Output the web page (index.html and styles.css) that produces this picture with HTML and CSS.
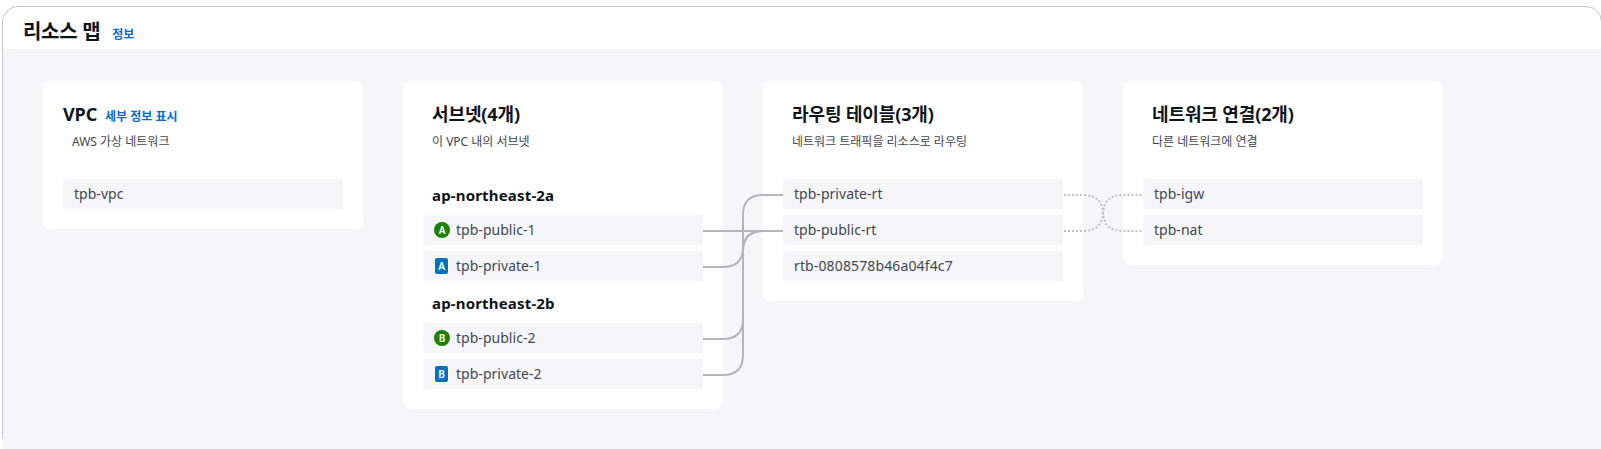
FILE: index.html
```html
<!DOCTYPE html>
<html lang="ko">
<head>
<meta charset="utf-8">
<title>리소스 맵</title>
<link rel="stylesheet" href="styles.css">
</head>
<body>
<section class="panel">
  <header class="panel-header">
    <h2 class="panel-title">리소스 맵</h2>
    <a class="info-link">정보</a>
  </header>
  <div class="map">
    <article class="card">
      <div class="card-head">
        <h3 class="card-title">VPC</h3>
        <a class="detail-link">세부 정보 표시</a>
      </div>
      <p class="card-desc">AWS 가상 네트워크</p>
      <ul class="items">
        <li class="item"><span class="name">tpb-vpc</span></li>
      </ul>
    </article>
    <article class="card">
      <div class="card-head indent"><h3 class="card-title">서브넷(4개)</h3></div>
      <p class="card-desc">이 VPC 내의 서브넷</p>
      <h4 class="zone">ap-northeast-2a</h4>
      <ul class="items zone-items">
        <li class="item"><span class="badge public">A</span><span class="name">tpb-public-1</span></li>
        <li class="item"><span class="badge private">A</span><span class="name">tpb-private-1</span></li>
      </ul>
      <h4 class="zone">ap-northeast-2b</h4>
      <ul class="items zone-items">
        <li class="item"><span class="badge public">B</span><span class="name">tpb-public-2</span></li>
        <li class="item"><span class="badge private">B</span><span class="name">tpb-private-2</span></li>
      </ul>
    </article>
    <article class="card">
      <div class="card-head indent"><h3 class="card-title">라우팅 테이블(3개)</h3></div>
      <p class="card-desc">네트워크 트래픽을 리소스로 라우팅</p>
      <ul class="items">
        <li class="item"><span class="name">tpb-private-rt</span></li>
        <li class="item"><span class="name">tpb-public-rt</span></li>
        <li class="item"><span class="name id">rtb-0808578b46a04f4c7</span></li>
      </ul>
    </article>
    <article class="card">
      <div class="card-head indent"><h3 class="card-title">네트워크 연결(2개)</h3></div>
      <p class="card-desc">다른 네트워크에 연결</p>
      <ul class="items">
        <li class="item"><span class="name">tpb-igw</span></li>
        <li class="item"><span class="name">tpb-nat</span></li>
      </ul>
    </article>
    <svg class="links" width="1440" height="320" viewBox="0 0 1440 320">
      <g class="solid">
        <path d="M660 150H740"/>
        <path d="M660 186H680Q700 186 700 166V170Q700 150 720 150H740"/>
        <path d="M660 258H680Q700 258 700 238V170Q700 150 720 150H740"/>
        <path d="M660 294H680Q700 294 700 274V134Q700 114 720 114H740"/>
      </g>
      <g class="dotted">
        <path d="M1021 114H1040Q1060 114 1060 134V130Q1060 150 1080 150H1100"/>
        <path d="M1021 150H1040Q1060 150 1060 130V134Q1060 114 1080 114H1100"/>
      </g>
    </svg>
  </div>
</section>
</body>
</html>
```
FILE: styles.css
```css
* { box-sizing: border-box; }
html, body { height: 100%; overflow: hidden; }
body {
  position: relative;
  margin: 0;
  padding: 6px 0 0 2px;
  background: #fff;
  color: #0f141a;
  font-family: "Noto Sans", "Noto Sans CJK KR", sans-serif;
}
/* The side border stops short of the bottom edge. */
body::after {
  content: "";
  position: absolute;
  left: 2px;
  bottom: 0;
  width: 1px;
  height: 10px;
  background: #fff;
}
h2, h3, h4, p, ul { margin: 0; padding: 0; }
.panel {
  width: 1600px;
  height: 460px;
  border: 1px solid #c6c6cd;
  border-radius: 16px;
  overflow: hidden;
}
.panel-header {
  display: flex;
  align-items: baseline;
  gap: 12px;
  height: 42px;
  padding: 10px 0 0 20px;
}
.panel-title { font-size: 20px; line-height: 30px; font-weight: 700; letter-spacing: -0.3px; }
.info-link, .detail-link { color: #006ce0; font-size: 12px; font-weight: 700; }
.map {
  position: relative;
  display: flex;
  align-items: flex-start;
  gap: 40px;
  height: 420px;
  padding: 32px 40px;
  background: #f6f6f9;
}
.card {
  flex: 0 0 320px;
  padding: 19px 20px 20px;
  border-radius: 8px;
  background: #fff;
}
.card-head { display: flex; align-items: baseline; gap: 8px; height: 30px; }
.indent { padding-left: 9px; }
.card-title { font-size: 18px; line-height: 28px; font-weight: 700; letter-spacing: -0.12px; }
.card-desc { height: 24px; padding-left: 9px; color: #424650; font-size: 12px; line-height: 24px; }
.items { display: flex; flex-direction: column; gap: 6px; padding-top: 25px; list-style: none; }
.zone { height: 42px; padding: 10px 0 0 9px; font-size: 15px; line-height: 24px; font-weight: 700; letter-spacing: 0.17px; }
.card-desc + .zone { margin-top: 19px; }
.zone-items { padding-top: 0; }
.item {
  display: flex;
  align-items: center;
  height: 30px;
  padding-left: 11px;
  border-radius: 2px;
  background: #f6f6f9;
  color: #424650;
  font-size: 14px;
  line-height: 30px;
}
.name { letter-spacing: 0.03px; }
.id { letter-spacing: 0.13px; }
.badge {
  width: 16px;
  height: 16px;
  margin-right: 6px;
  color: #fff;
  font-size: 10px;
  line-height: 16px;
  font-weight: 600;
  text-align: center;
}
.public { border-radius: 50%; background: #1d8102; }
.private { width: 13px; margin: 0 8px 0 1px; border-radius: 2px; background: #0073bb; }
.links { position: absolute; left: 40px; top: 32px; fill: none; stroke: #b4b4bb; stroke-width: 2; }
.dotted { stroke: #c0c0c6; stroke-dasharray: 2 2; }
```
